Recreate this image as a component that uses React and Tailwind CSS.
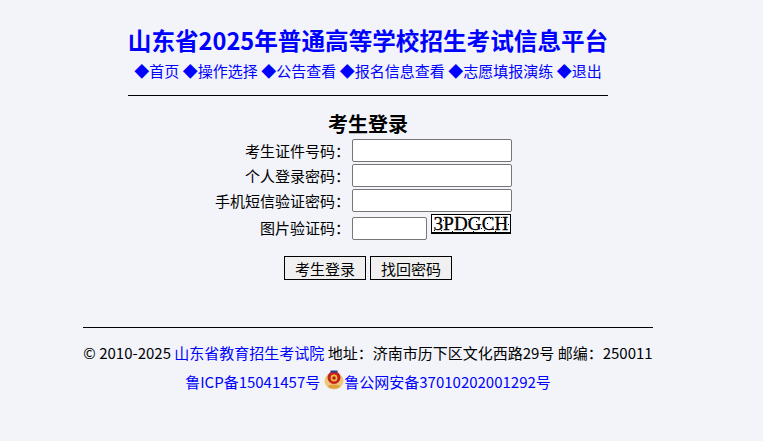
const font = { fontFamily: '"Noto Sans CJK SC", "Noto Sans", sans-serif' };

const navItems = ['首页', '操作选择', '公告查看', '报名信息查看', '志愿填报演练', '退出'];

const fields = [
  { label: '考生证件号码：' },
  { label: '个人登录密码：' },
  { label: '手机短信验证密码：' },
];

// noise specks of the captcha picture
const specks = [
  [3, 2], [9, 15], [14, 3], [20, 16], [27, 2], [31, 15], [36, 4], [41, 16], [47, 2], [52, 15], [58, 3], [63, 16], [69, 2], [73, 14],
  [5, 8], [17, 9], [25, 7], [34, 10], [44, 6], [55, 8], [66, 9], [72, 5], [11, 5], [39, 3], [61, 14], [49, 13], [2, 15], [76, 9],
];

function Captcha() {
  return (
    <div className="relative w-[80px] h-[20px] bg-white border border-black border-b-2 flex items-center justify-center overflow-hidden">
      <span className="text-[19px] leading-[18px] text-black tracking-[0.2px] [-webkit-text-stroke:0.3px_black] font-['Liberation_Serif',serif]">3PDGCH</span>
      <svg width="78" height="18" viewBox="0 0 78 18" className="absolute left-0 top-0">
        {specks.map(([x, y]) => (
          <rect key={`${x}-${y}`} x={x} y={y} width="1" height="1" fill="#000" />
        ))}
      </svg>
    </div>
  );
}

function Badge() {
  return (
    <svg width="20" height="22" viewBox="0 0 20 22" className="block">
      <ellipse cx="10" cy="13" rx="9.5" ry="8.5" fill="#ecc878" />
      <circle cx="10" cy="9.5" r="6.5" fill="#c8201c" />
      <circle cx="10" cy="10" r="3.4" fill="#f0c040" />
      <circle cx="10" cy="10" r="1.8" fill="#b02020" />
      <rect x="6.5" y="2.5" width="7" height="2" fill="#2a3f8f" />
      <ellipse cx="10" cy="18.5" rx="6" ry="2" fill="#e0a040" />
    </svg>
  );
}

export default function App() {
  return (
    <div style={font} className="min-h-[441px] w-full bg-[#f2f4fa] text-black text-[15px]">
      <div className="w-[736px] flex flex-col items-center">
        <div className="w-[480px] flex flex-col items-center pt-[22px]">
          <h1 className="text-[23.6px] leading-[36px] font-bold text-[#0000ff] whitespace-nowrap">山东省2025年普通高等学校招生考试信息平台</h1>
          <nav className="mt-[1px] flex gap-[3.5px] text-[#0000ff] leading-[24px] whitespace-nowrap">
            {navItems.map((n) => (
              <a key={n} href="#">◆{n}</a>
            ))}
          </nav>
          <div className="w-full h-px bg-black mt-[12px]" />
        </div>

        <h2 className="mt-[14px] text-[20px] leading-[28px] font-bold">考生登录</h2>

        <div className="flex flex-col gap-[2px] w-[736px] mt-[1px]">
          {fields.map((f) => (
            <div key={f.label} className="flex items-center h-[23px]">
              <label className="w-[350px] mr-[2px] pt-[2px] text-right whitespace-nowrap">{f.label}</label>
              <input className="w-[160px] h-[23px] bg-white border border-[#767676] rounded-[2px]" />
            </div>
          ))}
          <div className="flex items-center h-[23px] mt-[3px]">
            <label className="w-[350px] mr-[2px] text-right whitespace-nowrap">图片验证码：</label>
            <input className="w-[75px] h-[23px] bg-white border border-[#767676] rounded-[2px]" />
            <div className="ml-[4px] -mt-[9px]">
              <Captcha />
            </div>
          </div>
        </div>

        <div className="flex gap-[4px] mt-[16px]">
          <button className="w-[82px] h-[24px] border border-black bg-[#f0f0f0] leading-none">考生登录</button>
          <button className="w-[82px] h-[24px] border border-black bg-[#f0f0f0] leading-none">找回密码</button>
        </div>

        <div className="w-[570px] h-px bg-black mt-[47px]" />
        <p className="mt-[13px] leading-[24px] whitespace-nowrap">
          © 2010-2025 <a href="#" className="text-[#0000ff]">山东省教育招生考试院</a> 地址：济南市历下区文化西路29号 邮编：250011
        </p>
        <div className="mt-[5px] flex items-center gap-[4px] text-[#0000ff] leading-[24px] whitespace-nowrap">
          <a href="#">鲁ICP备15041457号</a>
          <span className="-mt-[6px]"><Badge /></span>
          <a href="#" className="-ml-[4px]">鲁公网安备37010202001292号</a>
        </div>
      </div>
    </div>
  );
}
